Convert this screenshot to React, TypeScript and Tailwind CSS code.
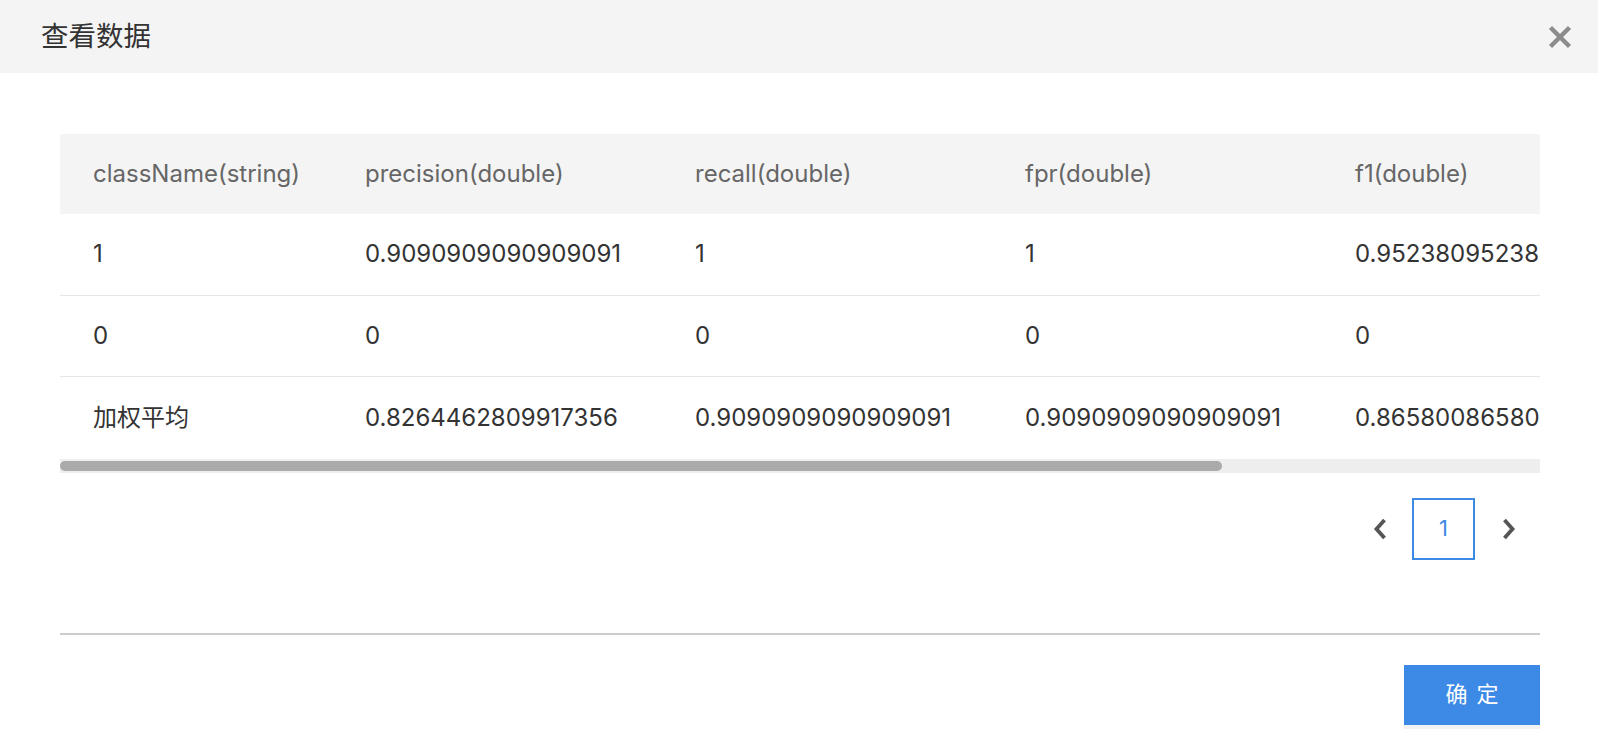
import React from 'react';

const columns = [
  { key: 'className', title: 'className(string)', width: 'w-[272px]' },
  { key: 'precision', title: 'precision(double)', width: 'w-[330px]' },
  { key: 'recall', title: 'recall(double)', width: 'w-[330px]' },
  { key: 'fpr', title: 'fpr(double)', width: 'w-[330px]' },
  { key: 'f1', title: 'f1(double)', width: 'w-[330px]' },
  { key: 'extra', title: '', width: 'w-[293px]' },
];

const rows: Record<string, string>[] = [
  { className: '1', precision: '0.9090909090909091', recall: '1', fpr: '1', f1: '0.9523809523809523', extra: '' },
  { className: '0', precision: '0', recall: '0', fpr: '0', f1: '0', extra: '' },
  {
    className: '加权平均',
    precision: '0.8264462809917356',
    recall: '0.9090909090909091',
    fpr: '0.9090909090909091',
    f1: '0.8658008658008658',
    extra: '',
  },
];

const font = { fontFamily: 'Inter, "Noto Sans CJK SC", sans-serif' };

export default function App() {
  return (
    <div className="w-[1598px] h-[752px] bg-white overflow-hidden" style={font}>
      {/* Title bar */}
      <div className="h-[73px] bg-[#f4f4f4] flex items-center justify-between pl-[41px] pr-[26px]">
        <h2 className="text-[27.5px] text-[#333]">查看数据</h2>
        <svg width="24" height="24" viewBox="0 0 24 24" className="text-[#8c8c8c]">
          <path d="M2.5 2.5 L21.5 21.5 M21.5 2.5 L2.5 21.5" stroke="currentColor" strokeWidth="4.5" />
        </svg>
      </div>

      <div className="pl-[60px] pr-[58px] pt-[61px]">
        {/* Table */}
        <div className="overflow-hidden">
          <div className="w-max">
            <div className="flex h-[80px] items-center bg-[#f4f4f4] text-[24px] text-[#666]">
              {columns.map((c) => (
                <div key={c.key} className={`${c.width} pl-[33px] whitespace-nowrap`}>
                  {c.title}
                </div>
              ))}
            </div>
            {rows.map((r, i) => (
              <div
                key={i}
                className={`flex h-[81.5px] items-center text-[24px] text-[#333] ${i < rows.length - 1 ? 'border-b border-[#e6e6e6]' : ''}`}
              >
                {columns.map((c) => (
                  <div key={c.key} className={`${c.width} pl-[33px] whitespace-nowrap`}>
                    {r[c.key]}
                  </div>
                ))}
              </div>
            ))}
          </div>
        </div>
        {/* Scrollbar */}
        <div className="h-[14px] bg-[#eeeeee] flex items-center">
          <div className="h-[10px] w-[1162px] rounded-full bg-[#aaaaaa]" />
        </div>

        {/* Pagination */}
        <div className="flex justify-end items-center mt-[25px] pr-[24px]">
          <svg width="14" height="22" viewBox="0 0 14 22" className="text-[#555] mr-[25px]">
            <path d="M11.5 2 L3.5 11 L11.5 20" fill="none" stroke="currentColor" strokeWidth="3.8" />
          </svg>
          <div className="w-[63px] h-[62px] border-2 border-[#3d8ae6] flex items-center justify-center text-[22px] text-[#3d8ae6]">
            1
          </div>
          <svg width="14" height="22" viewBox="0 0 14 22" className="text-[#555] ml-[27px]">
            <path d="M2.5 2 L10.5 11 L2.5 20" fill="none" stroke="currentColor" strokeWidth="3.8" />
          </svg>
        </div>

        {/* Divider */}
        <div className="mt-[73px] h-[2px] bg-[#cccccc]" />

        {/* Footer */}
        <div className="flex justify-end mt-[30px]">
          <button className="w-[136px] h-[60px] bg-[#3d8ae6] text-white text-[22px] flex items-center justify-center gap-[9px] shadow-[0_4px_0_#f2f2f2]">
            <span>确</span>
            <span>定</span>
          </button>
        </div>
      </div>
    </div>
  );
}
